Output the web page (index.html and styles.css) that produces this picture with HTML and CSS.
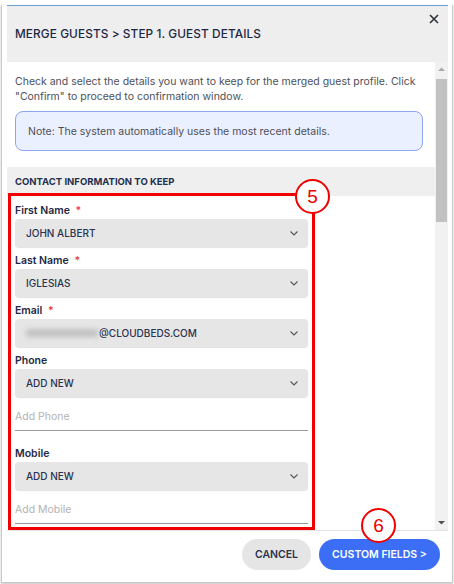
FILE: index.html
```html
<!DOCTYPE html>
<html lang="en">
<head>
    <meta charset="UTF-8">
    <title>Merge Guests</title>
    <link rel="stylesheet" href="styles.css">
</head>
<body>
    <div class="modal">
        <div class="modal_head">
            <h1 class="modal_title">MERGE GUESTS &gt; STEP 1. GUEST DETAILS</h1>
            <span class="close_btn">
                <svg width="10" height="10" viewBox="0 0 10 10"><path d="M1 1L9 9M9 1L1 9" stroke="#2b2f3a" stroke-width="1.6" fill="none"/></svg>
            </span>
        </div>

        <div class="modal_body">
            <div class="body_scroll">
                <p class="intro">Check and select the details you want to keep for the merged guest profile. Click "Confirm" to proceed to confirmation window.</p>
                <div class="note">Note: The system automatically uses the most recent details.</div>

                <div class="section_head">CONTACT INFORMATION TO KEEP</div>

                <div class="form_list">
                    <div class="field">
                        <label class="field_label">First Name <i>*</i></label>
                        <div class="select"><span>JOHN ALBERT</span><svg width="8" height="5" viewBox="0 0 8 5"><path d="M0.5 0.5L4 4L7.5 0.5" stroke="#555" stroke-width="1.1" fill="none"/></svg></div>
                    </div>
                    <div class="field">
                        <label class="field_label">Last Name <i>*</i></label>
                        <div class="select"><span>IGLESIAS</span><svg width="8" height="5" viewBox="0 0 8 5"><path d="M0.5 0.5L4 4L7.5 0.5" stroke="#555" stroke-width="1.1" fill="none"/></svg></div>
                    </div>
                    <div class="field">
                        <label class="field_label">Email <i>*</i></label>
                        <div class="select"><span><b class="blur"></b>@CLOUDBEDS.COM</span><svg width="8" height="5" viewBox="0 0 8 5"><path d="M0.5 0.5L4 4L7.5 0.5" stroke="#555" stroke-width="1.1" fill="none"/></svg></div>
                    </div>
                    <div class="field">
                        <label class="field_label">Phone</label>
                        <div class="select"><span>ADD NEW</span><svg width="8" height="5" viewBox="0 0 8 5"><path d="M0.5 0.5L4 4L7.5 0.5" stroke="#555" stroke-width="1.1" fill="none"/></svg></div>
                        <div class="text_input">Add Phone</div>
                    </div>
                    <div class="field">
                        <label class="field_label">Mobile</label>
                        <div class="select"><span>ADD NEW</span><svg width="8" height="5" viewBox="0 0 8 5"><path d="M0.5 0.5L4 4L7.5 0.5" stroke="#555" stroke-width="1.1" fill="none"/></svg></div>
                        <div class="text_input">Add Mobile</div>
                    </div>
                </div>
            </div>
            <div class="scrollbar">
                <svg class="arrow" width="13" height="12" viewBox="0 0 13 12"><path d="M3 8L6.5 4.5L10 8Z" fill="#a8a8a8"/></svg>
                <div class="thumb"></div>
                <div class="track_rest"></div>
                <svg class="arrow" width="13" height="12" viewBox="0 0 13 12"><path d="M3 4L6.5 7.5L10 4Z" fill="#505050"/></svg>
            </div>
        </div>

        <div class="modal_foot">
            <span class="btn btn_cancel">CANCEL</span>
            <span class="btn btn_blue">CUSTOM FIELDS &gt;</span>
        </div>

        <!-- annotations -->
        <div class="mark_box"></div>
        <div class="mark_num num5">5</div>
        <div class="mark_num num6">6</div>
    </div>
</body>
</html>
```
FILE: styles.css
```css
*{
    margin: 0;
    padding: 0;
    box-sizing: border-box;
}
body{
    width: 454px;
    height: 584px;
    background: #fff;
    font-family: "Inter", "Noto Sans", sans-serif;
    color: #2a3350;
    overflow: hidden;
}
.modal{
    position: relative;
    margin: 5px 2px 0 1px;
    width: 452px;
    border: 1px solid #c9c9c9;
    border-top: none;
    box-shadow: 0 1px 2px rgba(0,0,0,0.25);
    padding: 0 4px 0 5px;
    display: flex;
    flex-direction: column;
}
.modal_head{
    height: 57px;
    background: #eeeeee;
    border-top: 1px solid #6f9bd8;
    display: flex;
    justify-content: space-between;
    align-items: flex-start;
    padding: 0 9px 0 8px;
}
.modal_title{
    font-size: 11.8px;
    font-weight: 500;
    line-height: 16px;
    padding-top: 20px;
    color: #1f2844;
    letter-spacing: 0.1px;
}
.close_btn{
    display: block;
    margin-top: 8px;
    width: 10px;
    height: 10px;
}
.close_btn svg{
    display: block;
}
.modal_body{
    height: 468px;
    display: flex;
}
.body_scroll{
    flex: 1;
    overflow: hidden;
    padding-top: 12px;
}
.intro{
    font-size: 10.5px;
    line-height: 15px;
    color: #4d4f57;
    padding: 0 12px 0 8px;
}
.note{
    margin: 7px 12px 0 8px;
    height: 40px;
    background: #eaf0ff;
    border: 1px solid #8aa6ef;
    border-radius: 8px;
    font-size: 10.5px;
    color: #4d4f57;
    padding-left: 12px;
    display: flex;
    align-items: center;
}
.section_head{
    margin-top: 16px;
    height: 29px;
    background: #efefef;
    font-size: 9.5px;
    font-weight: 700;
    color: #243050;
    padding-left: 8px;
    display: flex;
    align-items: center;
}
.form_list{
    padding: 8px 0 0 8px;
    width: 301px;
}
.field{
    margin-bottom: 7px;
}
.field_label{
    display: block;
    font-size: 10.5px;
    font-weight: 600;
    line-height: 14px;
    margin-bottom: 1px;
    color: #1f2844;
}
.field_label i{
    font-style: normal;
    color: #e8414b;
    margin-left: 3px;
}
.select{
    height: 28px;
    background: #e6e6e6;
    border-radius: 4px;
    box-shadow: 0 1px 1px rgba(0,0,0,0.12);
    display: flex;
    align-items: center;
    justify-content: space-between;
    padding: 0 10px 0 11px;
    font-size: 10px;
    font-weight: 500;
    color: #2a3350;
}
.select span{
    display: flex;
    align-items: center;
}
.blur{
    display: inline-block;
    width: 72px;
    height: 8px;
    margin-right: 1px;
    background: #c2c2c2;
    filter: blur(2.5px);
}
.text_input{
    height: 28px;
    margin-top: 6px;
    border-bottom: 1px solid #9a9a9a;
    font-size: 10.5px;
    color: #b3b3b3;
    display: flex;
    align-items: center;
    margin-bottom: 16px;
}
.scrollbar{
    width: 13px;
    background: #f1f1f1;
    display: flex;
    flex-direction: column;
    padding: 1px 0;
}
.arrow{
    display: block;
    flex: none;
}
.thumb{
    margin: 4px 1px 0;
    height: 143px;
    background: #c1c1c1;
}
.track_rest{
    flex: 1;
}
.modal_foot{
    border-top: 1px solid #e3e3e3;
    display: flex;
    justify-content: flex-end;
    gap: 8px;
    padding: 8px 8px 12px;
}
.btn{
    height: 31px;
    border-radius: 16px;
    font-size: 10.5px;
    font-weight: 600;
    display: flex;
    align-items: center;
    justify-content: center;
}
.btn_cancel{
    width: 69px;
    background: #e5e5e5;
    color: #2a3350;
}
.btn_blue{
    width: 121px;
    background: #3c6ef5;
    color: #fff;
}
.mark_box{
    position: absolute;
    left: 6px;
    top: 188px;
    width: 307px;
    height: 337px;
    border: 3px solid #f00000;
}
.mark_num{
    position: absolute;
    width: 35px;
    height: 35px;
    border: 2px solid #f00000;
    border-radius: 50%;
    background: #fff;
    color: #f00000;
    font-family: "Liberation Sans", sans-serif;
    font-size: 19px;
    display: flex;
    align-items: center;
    justify-content: center;
}
.num5{
    left: 293px;
    top: 174px;
}
.num6{
    left: 359px;
    top: 503px;
}
```
